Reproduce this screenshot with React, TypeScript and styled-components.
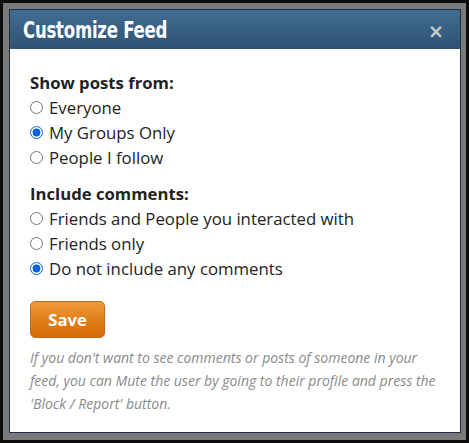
import React, { useState } from "react";
import styled, { createGlobalStyle } from "styled-components";

const GlobalStyle = createGlobalStyle`
  html, body {
    margin: 0;
    padding: 0;
    background: #0c0c0c;
  }
  * {
    box-sizing: border-box;
  }
`;

const Frame = styled.div`
  width: 469px;
  height: 443px;
  border: 3px solid #0c0c0c;
  background: #7a7a7a;
  padding: 6px 5px 7px 6px;
`;

const Dialog = styled.div`
  height: 100%;
  display: flex;
  flex-direction: column;
  background: #ffffff;
  border: 1px solid #1d2f40;
`;

const Header = styled.div`
  height: 39px;
  flex-shrink: 0;
  display: flex;
  align-items: center;
  justify-content: space-between;
  padding: 0 16px 0 13px;
  background: linear-gradient(to bottom, #416d92 0%, #2f5273 100%);
`;

const Title = styled.h2`
  margin: 0;
  font-family: "DejaVu Sans", "Liberation Sans", sans-serif;
  font-stretch: condensed;
  font-weight: 700;
  font-size: 23px;
  letter-spacing: -0.3px;
  color: #ffffff;
  transform: scaleX(0.8);
  transform-origin: left center;
`;

const Close = styled.button`
  border: none;
  background: none;
  padding: 0;
  margin-top: 4px;
  cursor: pointer;
  font-family: "DejaVu Sans", sans-serif;
  font-weight: 700;
  font-size: 19px;
  line-height: 1;
  color: #c6cbd0;
`;

const Body = styled.div`
  flex: 1;
  padding: 22px 20px 0 20px;
  font-family: "Open Sans", "Liberation Sans", sans-serif;
  color: #222;
`;

const Section = styled.div`
  margin-bottom: 12px;
`;

const SectionTitle = styled.div`
  font-weight: 700;
  font-size: 16.7px;
  line-height: 24px;
  color: #222;
`;

const Option = styled.label`
  display: flex;
  align-items: center;
  height: 25px;
  font-size: 16.8px;
  color: #222;
  cursor: pointer;
`;

const Radio = styled.input`
  width: 13px;
  height: 13px;
  margin: 0 6px 0 0;
  accent-color: #0a64e0;
`;

const SaveButton = styled.button`
  margin-top: 8px;
  width: 75px;
  height: 37px;
  border: 1px solid #c76a14;
  border-radius: 5px;
  background: linear-gradient(to bottom, #f19a3a 0%, #e07d17 55%, #d56d0b 100%);
  color: #ffffff;
  font-family: "Open Sans", "Liberation Sans", sans-serif;
  font-weight: 700;
  font-size: 16.7px;
  cursor: pointer;
`;

const Note = styled.p`
  margin: 8px 0 0 0;
  font-style: italic;
  font-size: 14px;
  line-height: 23px;
  color: #8a8a8a;
`;

const showOptions = ["Everyone", "My Groups Only", "People I follow"];
const commentOptions = [
  "Friends and People you interacted with",
  "Friends only",
  "Do not include any comments",
];

export default function App() {
  const [show, setShow] = useState("My Groups Only");
  const [comments, setComments] = useState("Do not include any comments");

  return (
    <>
      <GlobalStyle />
      <Frame>
        <Dialog>
          <Header>
            <Title>Customize Feed</Title>
            <Close aria-label="close">×</Close>
          </Header>
          <Body>
            <Section>
              <SectionTitle>Show posts from:</SectionTitle>
              {showOptions.map((o) => (
                <Option key={o}>
                  <Radio
                    type="radio"
                    name="show"
                    checked={show === o}
                    onChange={() => setShow(o)}
                  />
                  {o}
                </Option>
              ))}
            </Section>
            <Section>
              <SectionTitle>Include comments:</SectionTitle>
              {commentOptions.map((o) => (
                <Option key={o}>
                  <Radio
                    type="radio"
                    name="comments"
                    checked={comments === o}
                    onChange={() => setComments(o)}
                  />
                  {o}
                </Option>
              ))}
            </Section>
            <SaveButton>Save</SaveButton>
            <Note>
              If you don't want to see comments or posts of someone in your
              feed, you can Mute the user by going to their profile and press the
              'Block / Report' button.
            </Note>
          </Body>
        </Dialog>
      </Frame>
    </>
  );
}
